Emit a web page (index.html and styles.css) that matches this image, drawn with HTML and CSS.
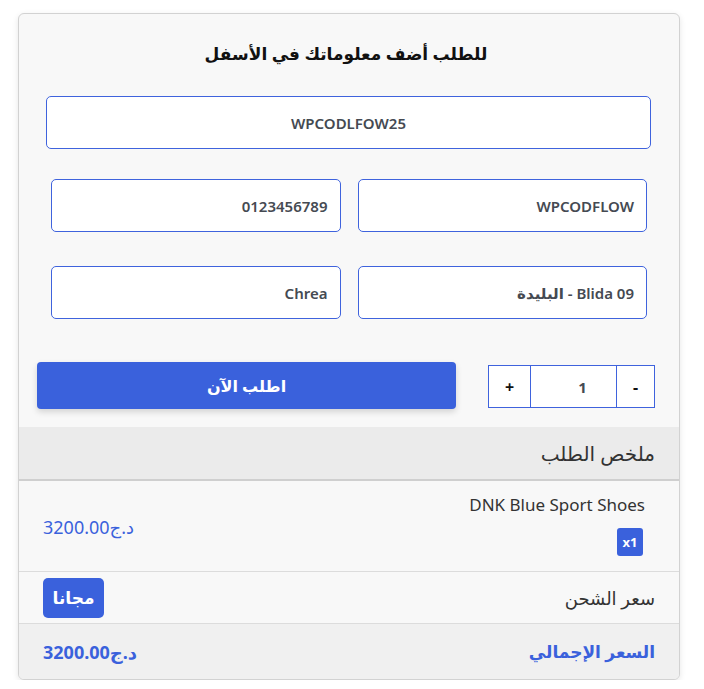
FILE: index.html
```html
<!DOCTYPE html>
<html lang="ar" dir="rtl">
<head>
<meta charset="utf-8">
<link rel="stylesheet" href="styles.css">
</head>
<body>
<div class="card">
  <div class="form">
    <h2 class="title">للطلب أضف معلوماتك في الأسفل</h2>
    <div class="field full"><span class="center">WPCODLFOW25</span></div>
    <div class="row">
      <div class="field">WPCODFLOW</div>
      <div class="field">0123456789</div>
    </div>
    <div class="row">
      <div class="field">09 Blida - البليدة</div>
      <div class="field">Chrea</div>
    </div>
    <div class="actions">
      <div class="qty">
        <div class="qbtn">-</div>
        <div class="qval">1</div>
        <div class="qbtn">+</div>
      </div>
      <div class="order-btn">اطلب الآن</div>
    </div>
  </div>
  <div class="summary-head">ملخص الطلب</div>
  <div class="line product">
    <div class="pinfo">
      <div class="pname">DNK Blue Sport Shoes</div>
      <span class="badge-x">x1</span>
    </div>
    <div class="price">د.ج3200.00</div>
  </div>
  <div class="line ship">
    <div class="label">سعر الشحن</div>
    <span class="free">مجانا</span>
  </div>
  <div class="line total">
    <div class="tlabel">السعر الإجمالي</div>
    <div class="tprice">د.ج3200.00</div>
  </div>
</div>
</body>
</html>
```

FILE: styles.css
```css
* { box-sizing: border-box; }
body {
  margin: 0;
  background: #fff;
  font-family: "Noto Sans", "DejaVu Sans", sans-serif;
  color: #333;
}
.card {
  margin: 13px 24px 0 18px;
  width: 662px;
  border: 1px solid #d2d2d2;
  border-radius: 6px;
  background: #f8f8f8;
  box-shadow: 0 2px 6px rgba(0,0,0,0.10);
  overflow: hidden;
}
.form {
  padding: 26px 24px 18px 18px;
}
.title {
  margin: 0 0 28px;
  text-align: center;
  font-size: 17px;
  font-weight: 700;
  color: #111;
  line-height: 28px;
}
.field {
  height: 53px;
  background: #fff;
  border: 1px solid #3f63dd;
  border-radius: 5px;
  display: flex;
  align-items: center;
  padding: 0 12px;
  font-size: 15px;
  font-weight: 600;
  color: #454a52;
}
.field.full {
  margin: 0 4px 0 9px;
  justify-content: center;
}
.row {
  display: grid;
  grid-template-columns: 1fr 1fr;
  gap: 17px;
  margin: 30px 8px 0 14px;
}
.row + .row { margin-top: 34px; }
.actions {
  display: flex;
  align-items: center;
  justify-content: space-between;
  margin-top: 43px;
}
.qty {
  display: flex;
  height: 43px;
  margin-top: 2px;
}
.qbtn, .qval {
  border: 1px solid #3f63dd;
  background: #fff;
  display: flex;
  align-items: center;
  justify-content: center;
  font-size: 16px;
  color: #111;
  font-weight: 700;
}
.qbtn { width: 43px; }
.qbtn:first-child { width: 39px; }
.qval {
  width: 85px;
  border-left: none;
  border-right: none;
  font-size: 15px;
  color: #454a52;
  padding-left: 18px;
}
.order-btn {
  width: 419px;
  height: 47px;
  background: #3a61dc;
  border-radius: 4px;
  color: #fff;
  font-weight: 700;
  font-size: 16px;
  display: flex;
  align-items: center;
  justify-content: center;
  box-shadow: 0 3px 6px rgba(0,0,0,0.15);
}
.summary-head {
  background: #ebebeb;
  height: 54px;
  border-bottom: 2px solid #cfcfcf;
  padding: 0 24px;
  display: flex;
  align-items: center;
  font-size: 20px;
  font-weight: 500;
  color: #333;
}
.line {
  display: flex;
  justify-content: space-between;
  padding: 0 24px;
}
.product {
  height: 91px;
  border-bottom: 1px solid #dcdcdc;
  align-items: flex-start;
}
.pinfo {
  display: flex;
  flex-direction: column;
  align-items: flex-start;
  padding-right: 10px;
  padding-top: 13px;
}
.pname {
  font-size: 17px;
  color: #333;
  line-height: 22px;
}
.badge-x {
  margin-top: 12px;
  background: #3a61dc;
  color: #fff;
  font-weight: 700;
  font-size: 13px;
  width: 26px;
  height: 28px;
  border-radius: 3px;
  display: flex;
  align-items: center;
  justify-content: center;
  margin-right: 2px;
}
.price {
  font-size: 18px;
  color: #3a61dc;
  margin-top: 34px;
}
.ship {
  height: 52px;
  align-items: center;
  border-bottom: 1px solid #dcdcdc;
}
.label { font-size: 18px; color: #333; }
.free {
  background: #3a61dc;
  color: #fff;
  font-weight: 700;
  font-size: 17px;
  border-radius: 5px;
  height: 40px;
  width: 61px;
  display: flex;
  align-items: center;
  justify-content: center;
}
.total {
  height: 55px;
  align-items: center;
  background: #f0f0f0;
}
.tlabel { font-size: 17px; color: #3a61dc; font-weight: 600; }
.tprice { font-size: 18px; color: #3a61dc; font-weight: 700; }
```
